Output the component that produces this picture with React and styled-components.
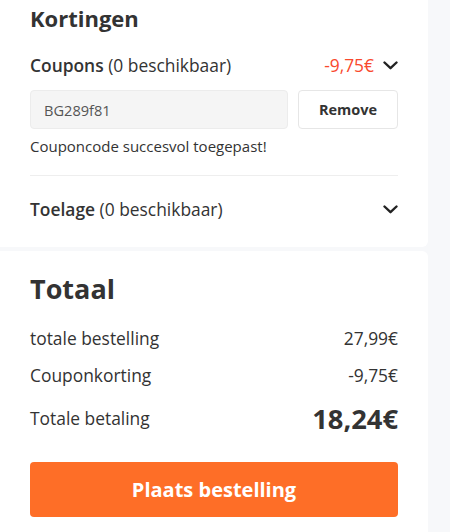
import React from "react";
import styled, { createGlobalStyle } from "styled-components";

const GlobalStyle = createGlobalStyle`
  body {
    margin: 0;
    background: #f7f8fa;
    font-family: "Open Sans", "Liberation Sans", sans-serif;
    color: #333;
  }
`;

const Page = styled.div`
  width: 428px;
  display: flex;
  flex-direction: column;
  gap: 4px;
`;

const Card = styled.section`
  background: #fff;
  padding: ${(p) => p.$pad};
  border-radius: ${(p) => p.$radius};
`;

const Title = styled.h2`
  margin: 0;
  font-size: ${(p) => p.$size};
  font-weight: 700;
  color: #333;
  line-height: ${(p) => p.$lh};
`;

const Row = styled.div`
  display: flex;
  align-items: center;
  justify-content: space-between;
  height: ${(p) => p.$h};
  margin-top: ${(p) => p.$mt || "0"};
`;

const Label = styled.span`
  font-size: 17.4px;
  color: #333;
  & > b {
    font-weight: 600;
  }
`;

const Right = styled.div`
  display: flex;
  align-items: center;
  gap: 9px;
`;

const Discount = styled.span`
  font-size: 17.4px;
  color: #f9492d;
`;

const InputRow = styled.div`
  display: flex;
  gap: 10px;
  height: 39px;
  margin-top: 7px;
`;

const CodeInput = styled.input`
  flex: 1;
  min-width: 0;
  box-sizing: border-box;
  background: #f5f5f5;
  border: 1px solid #ececec;
  border-radius: 4px;
  padding: 0 13px;
  font-family: inherit;
  font-size: 14.6px;
  color: #555;
  outline: none;
`;

const RemoveButton = styled.button`
  width: 100px;
  box-sizing: border-box;
  background: #fff;
  border: 1px solid #e6e6e6;
  border-radius: 4px;
  font-family: inherit;
  font-size: 14.5px;
  font-weight: 700;
  color: #333;
`;

const Note = styled.p`
  margin: 6px 0 0;
  font-size: 15px;
  line-height: 22px;
  color: #333;
`;

const Divider = styled.hr`
  border: 0;
  border-top: 1px solid #eeeeee;
  margin: 18px 0 0;
`;

const Amount = styled.span`
  font-size: ${(p) => (p.$big ? "27.3px" : "17.4px")};
  font-weight: ${(p) => (p.$big ? 700 : 400)};
  color: #333;
`;

const OrderButton = styled.button`
  display: block;
  width: 100%;
  height: 55px;
  margin-top: 24px;
  border: 0;
  border-radius: 4px;
  background: #fe6e27;
  color: #fff;
  font-family: inherit;
  font-size: 20px;
  font-weight: 700;
`;

const Chevron = () => (
  <svg width="15" height="9" viewBox="0 0 15 9" fill="none">
    <polyline
      points="1.5,1.5 7.5,7.2 13.5,1.5"
      stroke="#222"
      strokeWidth="2.4"
      strokeLinecap="round"
      strokeLinejoin="round"
    />
  </svg>
);

export default function App() {
  return (
    <>
      <GlobalStyle />
      <Page>
        <Card $pad="2px 30px 5px 30px" $radius="0 0 6px 0">
          <Title $size="22px" $lh="32px">Kortingen</Title>
          <Row $h="36px" $mt="13px">
            <Label>
              <b>Coupons</b> (0 beschikbaar)
            </Label>
            <Right>
              <Discount>-9,75€</Discount>
              <Chevron />
            </Right>
          </Row>
          <InputRow>
            <CodeInput defaultValue="BG289f81" />
            <RemoveButton>Remove</RemoveButton>
          </InputRow>
          <Note>Couponcode succesvol toegepast!</Note>
          <Divider />
          <Row $h="66px">
            <Label>
              <b>Toelage</b> (0 beschikbaar)
            </Label>
            <Chevron />
          </Row>
        </Card>
        <Card $pad="18px 30px 20px 30px" $radius="0 6px 0 0">
          <Title $size="27px" $lh="40px">Totaal</Title>
          <Row $h="36px" $mt="11px">
            <Label>totale bestelling</Label>
            <Amount>27,99€</Amount>
          </Row>
          <Row $h="36px" $mt="1px">
            <Label>Couponkorting</Label>
            <Amount>-9,75€</Amount>
          </Row>
          <Row $h="40px" $mt="5px">
            <Label>Totale betaling</Label>
            <Amount $big>18,24€</Amount>
          </Row>
          <OrderButton>Plaats bestelling</OrderButton>
        </Card>
      </Page>
    </>
  );
}
